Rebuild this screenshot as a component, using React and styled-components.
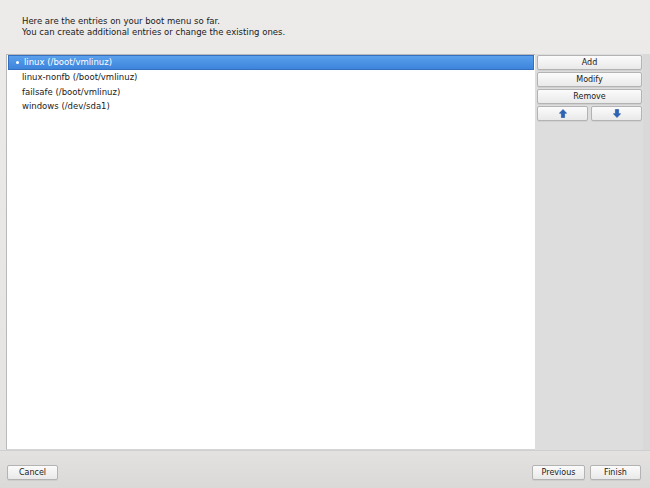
import React from "react";
import styled, { createGlobalStyle } from "styled-components";

const Global = createGlobalStyle`
  html, body { margin: 0; padding: 0; }
  body { width: 650px; height: 488px; overflow: hidden; background: #e8e7e6;
    font-family: "DejaVu Sans", Verdana, sans-serif; font-size: 8px; color: #1a1a1a; }
`;

const Page = styled.div`
  width: 650px; height: 488px; display: flex; flex-direction: column;
  background: linear-gradient(#ecebea, #e4e3e2);
`;

const Header = styled.div`
  height: 54px; box-sizing: border-box; padding: 16px 0 0 22px; line-height: 11px;
  font-size: 8.5px;
`;

const Main = styled.div`
  flex: 1; display: flex; padding-left: 6px;
`;

const List = styled.div`
  width: 529px; box-sizing: border-box; background: #fff;
  border: 1px solid #b9b9b9; border-right: none; border-bottom-color: #d6d6d6;
  font-size: 8.5px;
`;

const Row = styled.div`
  height: 14.7px; display: flex; align-items: center; box-sizing: border-box;
  padding-left: ${p => (p.$sel ? "7px" : "15px")};
  ${p => p.$sel && `
    background: linear-gradient(#5aa0ec, #3d84dc);
    color: #fff; border: 1px solid #3570c0; margin: 0 1px; height: 14.5px;
  `}
`;

const Bullet = styled.span`
  display: inline-block; width: 3px; height: 3px; border-radius: 50%;
  background: #fff; margin-right: 5px;
`;

const Side = styled.div`
  width: 108px; background: #dddddd; display: flex; flex-direction: column;
  gap: 2px; padding: 1px 1px 0 2px; box-sizing: border-box;
`;

const Strip = styled.div`
  flex: 1; background: #d9d9d9;
`;

const Btn = styled.button`
  font-family: inherit; font-size: 8px; color: #1a1a1a;
  height: 15px; padding: 0; box-sizing: border-box;
  border: 1px solid #b3b3b3; border-radius: 2px;
  background: linear-gradient(#fbfbfb, #e9e9e9);
  box-shadow: 0 1px 0 rgba(0,0,0,0.06);
  width: ${p => p.$w || "auto"};
`;

const ArrowRow = styled.div`
  display: flex; gap: 3px;
  & > button { flex: 1; display: flex; align-items: center; justify-content: center; }
`;

const Footer = styled.div`
  height: 38px; box-sizing: border-box; border-top: 1px solid #cfcfcf;
  background: linear-gradient(#e3e2e1, #dad9d8);
  display: flex; align-items: center; padding: 6px 9px 0 7px; gap: 5px;
`;

const Spacer = styled.div`flex: 1;`;

const Up = () => (
  <svg width="8" height="9" viewBox="0 0 8 9">
    <path d="M4 0.5 L7.6 4.3 L5.6 4.3 L5.6 8.5 L2.4 8.5 L2.4 4.3 L0.4 4.3 Z" fill="#2a64b8" stroke="#1d4f99" strokeWidth="0.6"/>
  </svg>
);
const Down = () => (
  <svg width="8" height="9" viewBox="0 0 8 9">
    <path d="M4 8.5 L7.6 4.7 L5.6 4.7 L5.6 0.5 L2.4 0.5 L2.4 4.7 L0.4 4.7 Z" fill="#2a64b8" stroke="#1d4f99" strokeWidth="0.6"/>
  </svg>
);

const entries = ["linux (/boot/vmlinuz)", "linux-nonfb (/boot/vmlinuz)", "failsafe (/boot/vmlinuz)", "windows (/dev/sda1)"];

export default function App() {
  return (
    <Page>
      <Global />
      <Header>
        Here are the entries on your boot menu so far.<br />
        You can create additional entries or change the existing ones.
      </Header>
      <Main>
        <List>
          {entries.map((e, i) => (
            <Row key={e} $sel={i === 0}>
              {i === 0 && <Bullet />}
              {e}
            </Row>
          ))}
        </List>
        <Side>
          <Btn>Add</Btn>
          <Btn>Modify</Btn>
          <Btn>Remove</Btn>
          <ArrowRow>
            <Btn><Up /></Btn>
            <Btn><Down /></Btn>
          </ArrowRow>
        </Side>
        <Strip />
      </Main>
      <Footer>
        <Btn $w="51px">Cancel</Btn>
        <Spacer />
        <Btn $w="53px">Previous</Btn>
        <Btn $w="51px">Finish</Btn>
      </Footer>
    </Page>
  );
}
